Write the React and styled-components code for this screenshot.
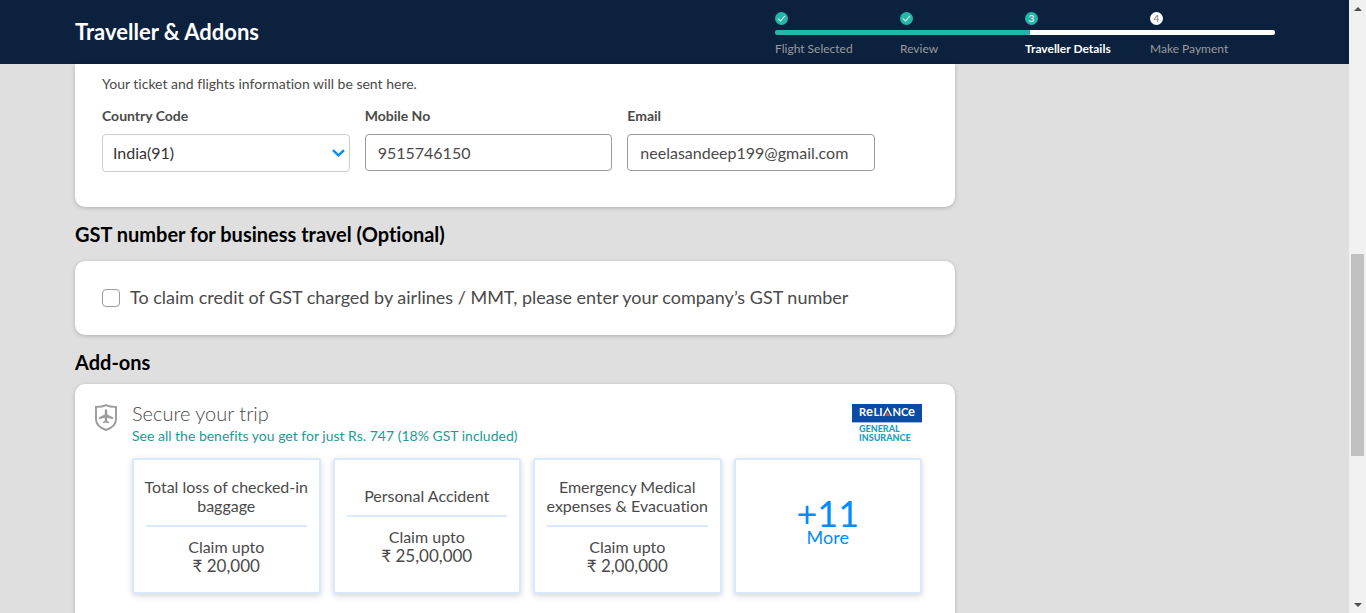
import React from "react";
import styled, { createGlobalStyle } from "styled-components";

const GlobalStyle = createGlobalStyle`
  *, *::before, *::after { box-sizing: border-box; }
  body {
    margin: 0;
    background: #dfdfdf;
    color: #4a4a4a;
    font-family: Lato, "Liberation Sans", sans-serif;
    font-variant-ligatures: none;
  }
  h1, h2, h3, p, ol { margin: 0; padding: 0; }
  input, select, button { font-family: inherit; }
`;

const Shell = styled.div`
  display: grid;
  grid-template-columns: minmax(0, 1fr) 17px;
  height: 100vh;
  overflow: hidden;
`;

const Page = styled.div`
  min-width: 0;
  overflow: hidden;
`;

const Header = styled.header`
  height: 64px;
  background: #0b213e;
`;

const Container = styled.div`
  max-width: 1201px;
  margin: 0 auto;
  padding-left: 1px;
`;

const HeaderRow = styled(Container)`
  display: flex;
  align-items: center;
  justify-content: space-between;
  height: 100%;
`;

const PageTitle = styled.h1`
  color: #fff;
  font-size: 22px;
  line-height: 26px;
  font-weight: 700;
`;

const Steps = styled.ol`
  display: grid;
  grid-template-columns: repeat(4, 125px);
  margin-top: 4px;
  list-style: none;
`;

const Step = styled.li`
  display: flex;
  flex-direction: column;
`;

const StepBadge = styled.span`
  display: flex;
  align-items: center;
  justify-content: center;
  width: 13px;
  height: 13px;
  border-radius: 50%;
  background: ${(p) => (p.$pending ? "#fff" : "#26b5a9")};
  color: ${(p) => (p.$pending ? "#747474" : "#fff")};
  font-size: 10px;
  line-height: 13px;
`;

const StepBar = styled.span`
  height: 5px;
  margin: 5px 0 6px;
  border-radius: ${(p) => (p.$last ? "0 2px 2px 0" : p.$first ? "2px 0 0 2px" : "0")};
  background: ${(p) =>
    p.$state === "done"
      ? "#26b5a9"
      : p.$state === "current"
      ? "linear-gradient(90deg, #26b5a9 5px, #fff 5px)"
      : "#fff"};
`;

const StepLabel = styled.span`
  color: ${(p) => (p.$current ? "#fff" : "#9b9b9b")};
  font-size: 12px;
  line-height: 16px;
  font-weight: ${(p) => (p.$current ? 700 : 400)};
`;

const MainColumn = styled.main`
  max-width: 880px;
`;

const Card = styled.section`
  background: #fff;
  border-radius: ${(p) => (p.$continued ? "0 0 10px 10px" : "10px")};
  box-shadow: 0 1px 4px rgba(0, 0, 0, 0.21);
`;

const ContactCard = styled(Card)`
  padding: 10px 27px 35px;
`;

const Note = styled.p`
  font-size: 14px;
  line-height: 20px;
`;

const Fields = styled.div`
  display: grid;
  grid-template-columns: repeat(3, minmax(0, 1fr));
  gap: 15px;
  max-width: 773px;
  margin-top: 12px;
`;

const Field = styled.div`
  display: flex;
  flex-direction: column;
`;

const FieldLabel = styled.label`
  margin-bottom: 8px;
  font-size: 14px;
  line-height: 20px;
  font-weight: 700;
`;

const TextInput = styled.input`
  width: 100%;
  height: 37px;
  padding: 0 12px;
  border: 1px solid #9b9b9b;
  border-radius: 4px;
  background: #fff;
  color: #4a4a4a;
  font-size: 16px;
`;

const SelectWrap = styled.div`
  display: grid;
  align-items: center;

  & > * { grid-area: 1 / 1; }
  svg {
    justify-self: end;
    margin-right: 5px;
    pointer-events: none;
  }
`;

const Select = styled.select`
  appearance: none;
  width: 100%;
  height: 38px;
  padding: 0 10px 2px;
  border: 1px solid #ccc;
  border-radius: 4px;
  background: #fff;
  color: #333;
  font-size: 16px;
`;

const SectionTitle = styled.h2`
  margin: 14px 0 ${(p) => (p.$tight ? "9px" : "14px")};
  color: #000;
  font-size: 20px;
  line-height: 26px;
  font-weight: 700;
`;

const GstCard = styled(Card)`
  display: flex;
  align-items: center;
  gap: 10px;
  padding: 24px 27px;
`;

const Checkbox = styled.input`
  appearance: none;
  width: 18px;
  height: 18px;
  margin: 0;
  border: 1px solid #9b9b9b;
  border-radius: 4px;
  background: #fff;
  &:checked { background: #008cff; }
`;

const GstLabel = styled.label`
  padding-bottom: 2px;
  font-size: 18px;
  line-height: 24px;
`;

const InsuranceCard = styled(Card)`
  display: grid;
  grid-template-columns: 24px minmax(0, 1fr);
  column-gap: 14px;
  padding: 19px 33px 30px 19px;
`;

const InsuranceHead = styled.div`
  display: flex;
  justify-content: space-between;
`;

const InsuranceTitle = styled.h3`
  margin-bottom: 3px;
  font-size: 20px;
  line-height: 20px;
  font-weight: 300;
`;

const BenefitsLink = styled.a`
  display: block;
  color: #249995;
  font-size: 14px;
  line-height: 20px;
  text-decoration: none;
`;

const Tiles = styled.div`
  display: grid;
  grid-template-columns: repeat(4, minmax(0, 1fr));
  gap: 12px;
  margin-top: 12px;
`;

const tile = `
  display: flex;
  flex-direction: column;
  justify-content: center;
  height: 136px;
  border: 2px solid #d8e9ff;
  border-radius: 3px;
  background: #fff;
  box-shadow: 0 2px 6px rgba(0, 0, 0, 0.16);
  text-align: center;
`;

const Tile = styled.article`
  ${tile}
  padding: 0 8px;
`;

const MoreTile = styled.button`
  ${tile}
  padding: 0 8px 6px;
  color: #008cff;
  cursor: pointer;
`;

const TileTitle = styled.h3`
  font-size: 16px;
  line-height: 19px;
  font-weight: 400;
`;

const TileRule = styled.hr`
  align-self: stretch;
  height: 2px;
  margin: 10px 4px;
  border: 0;
  background: #d8e9ff;
`;

const TileClaim = styled.p`
  font-size: 16px;
  line-height: 19px;
`;

const TileAmount = styled.p`
  font-size: 17px;
  line-height: 20px;
`;

const MoreCount = styled.span`
  font-size: 36px;
  line-height: 28px;
`;

const MoreLabel = styled.span`
  font-size: 18px;
  line-height: 20px;
`;

const ScrollTrack = styled.div`
  display: grid;
  grid-template-rows: 17px 237fr 202fr 140fr 17px;
  justify-items: center;
  align-items: center;
  background: #f1f1f1;
`;

const ScrollThumb = styled.span`
  grid-row: 3;
  width: 13px;
  height: 100%;
  background: #c1c1c1;
`;

const ScrollArrow = styled.svg`
  grid-row: ${(p) => (p.$down ? 5 : 1)};
  display: block;
`;

function CheckIcon() {
  return (
    <svg width="9" height="9" viewBox="0 0 9 9" fill="none" stroke="#d5f2ef" strokeWidth="1.1" aria-hidden="true">
      <path d="M1 4.7 3.4 7 8 1.8" />
    </svg>
  );
}

function ChevronIcon() {
  return (
    <svg width="13" height="9" viewBox="0 0 13 9" fill="none" stroke="#008cff" strokeWidth="2.4" aria-hidden="true">
      <path d="M1 1.2 6.5 6.4 12 1.2" />
    </svg>
  );
}

function ShieldPlaneIcon() {
  return (
    <svg width="24" height="29" viewBox="0 0 24 29" aria-hidden="true">
      <path
        d="M12 2.1C9.2 3.5 5.5 4 2 3.9V16.5C2 21.4 6.4 25 12 27 17.6 25 22 21.4 22 16.5V3.9C18.5 4 14.8 3.5 12 2.1Z"
        fill="none"
        stroke="#9b9b9b"
        strokeWidth="1.9"
      />
      <path
        d="M12 6.3C12.7 6.3 13 7.2 13 8.1V11.6L19 14.6V16L13 14.6V17.9L14.8 19.1V20L12 19.5 9.2 20V19.1L11 17.9V14.6L5 16V14.6L11 11.6V8.1C11 7.2 11.3 6.3 12 6.3Z"
        fill="#9b9b9b"
        stroke="#9b9b9b"
        strokeWidth="0.4"
      />
    </svg>
  );
}

function RelianceLogo() {
  return (
    <svg width="70" height="40" viewBox="0 0 70 40" role="img" aria-label="Reliance General Insurance">
      <rect y="1" width="70" height="19" fill="#aab3dc" />
      <rect y="1" width="70" height="18" fill="#0b4ba3" />
      <g fill="#fff" fontFamily="Lato, sans-serif" fontWeight="700" fontSize="11">
        <text x="7" y="13">R</text>
        <text x="14" y="13" fontSize="13">e</text>
        <text x="21.5" y="13">LI</text>
        <text x="40.5" y="13">NC</text>
        <text x="56" y="13" fontSize="13">e</text>
      </g>
      <path d="M31.5 13 35.5 5.5 39.5 13" fill="none" stroke="#fff" strokeWidth="1.5" />
      <path d="M33.2 13 35.5 9 37.8 13Z" fill="#ef4136" />
      <g fill="#1ba0c8" fontFamily="Lato, sans-serif" fontWeight="900" fontSize="9">
        <text x="7" y="29">GENERAL</text>
        <text x="7" y="38">INSURANCE</text>
      </g>
    </svg>
  );
}

const steps = [
  { label: "Flight Selected", state: "done" },
  { label: "Review", state: "done" },
  { label: "Traveller Details", state: "current" },
  { label: "Make Payment", state: "pending" },
];

const covers = [
  { title: "Total loss of checked-in baggage", amount: "20,000" },
  { title: "Personal Accident", amount: "25,00,000" },
  { title: "Emergency Medical expenses & Evacuation", amount: "2,00,000" },
];

export default function App() {
  return (
    <>
      <GlobalStyle />
      <Shell>
        <Page>
          <Header>
            <HeaderRow>
              <PageTitle>Traveller &amp; Addons</PageTitle>
              <Steps>
                {steps.map((s, i) => (
                  <Step key={s.label}>
                    <StepBadge $pending={s.state === "pending"}>
                      {s.state === "done" ? <CheckIcon /> : i + 1}
                    </StepBadge>
                    <StepBar $state={s.state} $first={i === 0} $last={i === steps.length - 1} />
                    <StepLabel $current={s.state === "current"}>{s.label}</StepLabel>
                  </Step>
                ))}
              </Steps>
            </HeaderRow>
          </Header>
          <Container>
            <MainColumn>
              <ContactCard $continued>
                <Note>Your ticket and flights information will be sent here.</Note>
                <Fields>
                  <Field>
                    <FieldLabel htmlFor="country">Country Code</FieldLabel>
                    <SelectWrap>
                      <Select id="country" defaultValue="91">
                        <option value="91">India(91)</option>
                      </Select>
                      <ChevronIcon />
                    </SelectWrap>
                  </Field>
                  <Field>
                    <FieldLabel htmlFor="mobile">Mobile No</FieldLabel>
                    <TextInput id="mobile" type="tel" defaultValue="9515746150" />
                  </Field>
                  <Field>
                    <FieldLabel htmlFor="email">Email</FieldLabel>
                    <TextInput id="email" type="email" defaultValue="neelasandeep199@gmail.com" />
                  </Field>
                </Fields>
              </ContactCard>

              <SectionTitle>GST number for business travel (Optional)</SectionTitle>
              <GstCard>
                <Checkbox id="gst" type="checkbox" />
                <GstLabel htmlFor="gst">
                  To claim credit of GST charged by airlines / MMT, please enter your company’s GST number
                </GstLabel>
              </GstCard>

              <SectionTitle $tight>Add-ons</SectionTitle>
              <InsuranceCard>
                <ShieldPlaneIcon />
                <div>
                  <InsuranceHead>
                    <div>
                      <InsuranceTitle>Secure your trip</InsuranceTitle>
                      <BenefitsLink href="#benefits">
                        See all the benefits you get for just Rs. 747 (18% GST included)
                      </BenefitsLink>
                    </div>
                    <RelianceLogo />
                  </InsuranceHead>
                  <Tiles>
                    {covers.map((c) => (
                      <Tile key={c.title}>
                        <TileTitle>{c.title}</TileTitle>
                        <TileRule />
                        <TileClaim>Claim upto</TileClaim>
                        <TileAmount>₹ {c.amount}</TileAmount>
                      </Tile>
                    ))}
                    <MoreTile type="button">
                      <MoreCount>+11</MoreCount>
                      <MoreLabel>More</MoreLabel>
                    </MoreTile>
                  </Tiles>
                </div>
              </InsuranceCard>
            </MainColumn>
          </Container>
        </Page>
        <ScrollTrack aria-hidden="true">
          <ScrollArrow width="8" height="4" viewBox="0 0 8 4">
            <path d="M0 4 4 0 8 4Z" fill="#505050" />
          </ScrollArrow>
          <ScrollThumb />
          <ScrollArrow $down width="8" height="4" viewBox="0 0 8 4">
            <path d="M0 0 4 4 8 0Z" fill="#505050" />
          </ScrollArrow>
        </ScrollTrack>
      </Shell>
    </>
  );
}
